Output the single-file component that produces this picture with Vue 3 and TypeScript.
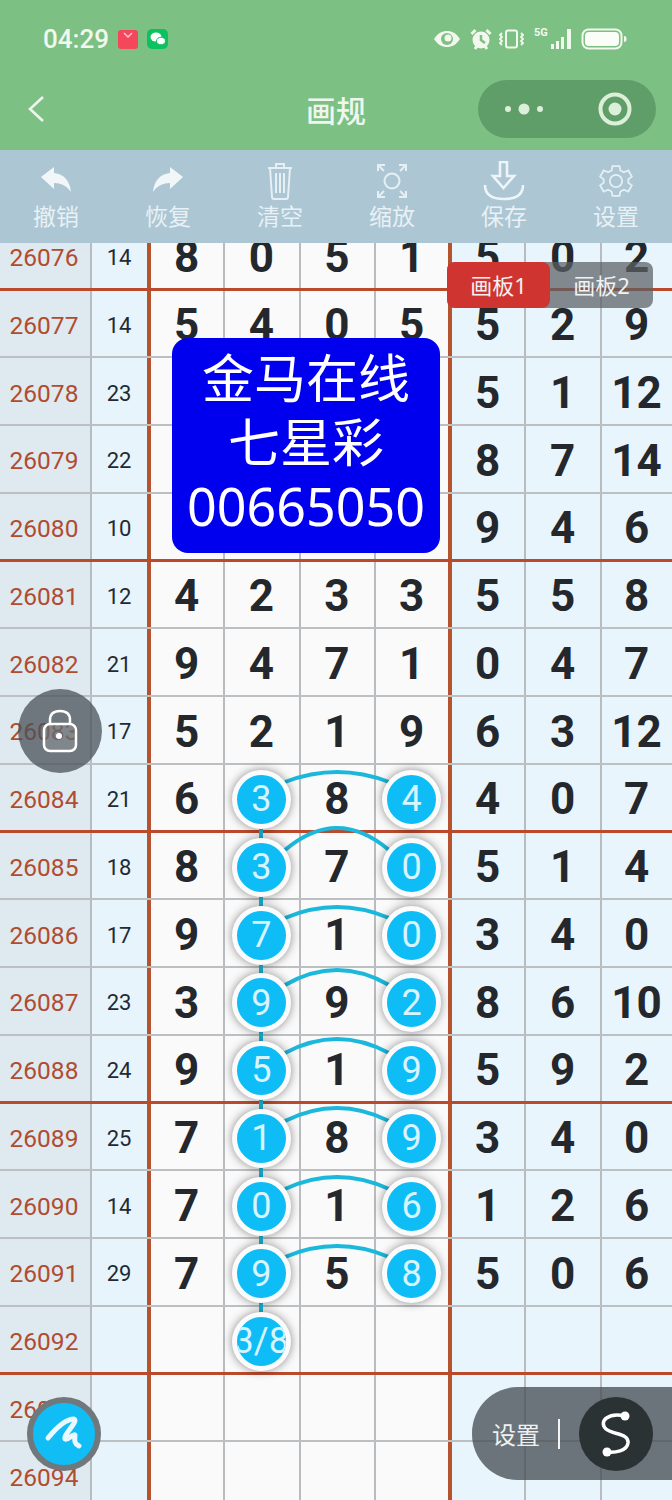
<template>
  <div class="page">
    <header class="top">
      <div class="status">
        <span class="time">04:29</span>
        <svg class="app-dot" width="20" height="19" viewBox="0 0 20 19">
          <rect width="20" height="19" rx="3" fill="#f5475b" />
          <path d="M6 3l4 4 4-4" fill="none" stroke="#ffc9cf" stroke-width="1.5" />
        </svg>
        <svg class="app-dot" width="21" height="20" viewBox="0 0 21 20">
          <rect width="21" height="20" rx="5" fill="#0bc160" />
          <ellipse cx="9" cy="8" rx="5.5" ry="4.5" fill="#fff" />
          <ellipse cx="14" cy="12" rx="4.5" ry="3.8" fill="#fff" stroke="#0bc160" />
        </svg>
        <div class="status-right">
          <svg width="28" height="20" viewBox="0 0 28 20">
            <path d="M1 10C5 4 9 2 14 2s9 2 13 8c-4 6-8 8-13 8S5 16 1 10z" fill="#f2f8ee" />
            <circle cx="14" cy="10" r="6" fill="#7cc083" />
            <circle cx="15" cy="9" r="3.5" fill="#f2f8ee" />
          </svg>
          <svg width="22" height="22" viewBox="0 0 22 22">
            <circle cx="11" cy="12" r="8.5" fill="#f2f8ee" />
            <path d="M11 7v5l4 3" fill="none" stroke="#7cc083" stroke-width="2.5" />
            <path d="M1.500 6l4-4M20.500 6l-4-4M5 21l2-3M17 21l-2-3" stroke="#f2f8ee" stroke-width="3" />
          </svg>
          <svg width="27" height="20" viewBox="0 0 27 20">
            <rect x="8" y="1.500" width="11" height="17" rx="2" fill="none" stroke="#f2f8ee" stroke-width="2" />
            <path d="M4 4L2 6l2 2-2 2 2 2-2 2 2 2M23 4l2 2-2 2 2 2-2 2 2 2-2 2" fill="none" stroke="#f2f8ee" stroke-width="1.8" />
          </svg>
          <span class="signal">
            <span class="five-g">5G</span>
            <svg width="22" height="20" viewBox="0 0 22 20">
              <path d="M1 15h3v5H1zM6 12h3v8H6zM11 8h3v12h-3zM17 0h4v20h-4z" fill="#f2f8ee" />
            </svg>
          </span>
          <svg width="46" height="22" viewBox="0 0 46 22">
            <rect x="1.5" y="1.5" width="39" height="19" rx="6" fill="none" stroke="#f2f8ee" stroke-width="2" />
            <rect x="4" y="4" width="34" height="14" rx="4" fill="#fbfdf9" />
            <path d="M43 8c2 0 2.500 1 2.500 3s-.5 3-2.500 3z" fill="#f2f8ee" />
          </svg>
        </div>
      </div>
      <nav class="nav">
        <svg class="back" width="18" height="28" viewBox="0 0 18 28">
          <path d="M16 2L3 14l13 12" fill="none" stroke="#eef6ef" stroke-width="2.600" />
        </svg>
        <span class="title">画规</span>
        <div class="capsule">
          <svg width="46" height="14" viewBox="0 0 46 14">
            <circle cx="5" cy="7" r="3" fill="#dcefd9" />
            <circle cx="21" cy="7" r="5.500" fill="#dcefd9" />
            <circle cx="37" cy="7" r="3" fill="#dcefd9" />
          </svg>
          <svg width="34" height="34" viewBox="0 0 34 34">
            <circle cx="17" cy="17" r="14.500" fill="none" stroke="#dcefd9" stroke-width="4" />
            <circle cx="17" cy="17" r="6.500" fill="#dcefd9" />
          </svg>
        </div>
      </nav>
    </header>

    <div class="toolbar">
      <div v-for="tool in tools" :key="tool.label" class="tool">
        <svg class="tool-icon" width="44" height="40" viewBox="0 0 44 40" v-html="tool.icon" />
        <span>{{ tool.label }}</span>
      </div>
    </div>

    <main class="board">
      <div class="rows">
        <div v-for="row in rows" :key="row.id" :class="['row', { split: row.split }]">
          <div class="cell issue">{{ row.id }}</div>
          <div class="cell sum">{{ row.sum }}</div>
          <div v-for="(num, i) in row.main" :key="i" :class="['cell', 'main', { edge: i === 3 }]">
            <span v-if="row.circled.includes(i)" class="ball">{{ num }}</span>
            <template v-else>{{ num }}</template>
          </div>
          <div v-for="(num, i) in row.side" :key="i" class="cell side">{{ num }}</div>
        </div>
      </div>

      <svg class="lines" width="672" height="1257" viewBox="0 243 672 1257">
        <path d="M261 799V1340" stroke="#1cb8dc" stroke-width="4" fill="none" />
        <path v-for="arc in arcs" :key="arc" :d="arc" stroke="#1cb8dc" stroke-width="4" fill="none" />
      </svg>

      <div class="ad">
        <span>金马在线</span>
        <span>七星彩</span>
        <span>00665050</span>
      </div>

      <div class="tabs">
        <span class="tab on">画板1</span>
        <span class="tab">画板2</span>
      </div>

      <div class="lock">
        <svg width="36" height="46" viewBox="0 0 36 46">
          <path d="M8 17V12C8 6 12 3 18 3s10 3 10 9v5" fill="none" stroke="#fff" stroke-width="2.500" />
          <rect x="2" y="16" width="32" height="27" rx="6" fill="rgba(255,255,255,.12)" stroke="#fff" stroke-width="2.500" />
          <circle cx="17" cy="28" r="3" fill="#fff" />
        </svg>
      </div>

      <div class="pen">
        <svg width="62" height="62" viewBox="0 0 62 62">
          <path d="M15 35C24 24 34 16 41 16c5 2-11 16-9 20 3 2 8-6 10-4 0 4-2 8 4 11" fill="none" stroke="#e9f9ff" stroke-width="5" stroke-linecap="round" stroke-linejoin="round" />
        </svg>
      </div>

      <div class="dock">
        <span class="dock-text">设置</span>
        <i class="dock-bar" />
        <div class="dock-btn">
          <svg width="74" height="74" viewBox="0 0 74 74">
            <path d="M46 19C30 15 19 24 27 32c7 6 23 4 22 14-1 8-13 10-21 9" fill="none" stroke="#fff" stroke-width="3.500" />
            <circle cx="46" cy="19" r="4.500" fill="#fff" />
            <circle cx="28" cy="55" r="4.500" fill="#fff" />
          </svg>
        </div>
      </div>
    </main>
  </div>
</template>

<script setup lang="ts">
interface Row {
  id: number
  sum: string
  main: string[]
  side: string[]
  circled: number[]
  split: boolean
}

const line = 'fill="none" stroke="#e6f0f4" stroke-width="2"'

const tools = [
  {
    label: '撤销',
    icon: '<path d="M7 16L20 6v6c10 1 16 8 17 19-4-6-10-9-17-9v6z" fill="#f1f7f9"/>',
  },
  {
    label: '恢复',
    icon: '<path d="M37 16L24 6v6C14 13 8 20 7 31c4-6 10-9 17-9v6z" fill="#f1f7f9"/>',
  },
  {
    label: '清空',
    icon: `<path d="M10 7h24M18 7V3h8v4M12 7l2 29c0 1 1 2 2 2h12c1 0 2-1 2-2l2-29M18 12v20M22 12v20M26 12v20" ${line}/>`,
  },
  {
    label: '缩放',
    icon: `<path d="M8 10V4h7M36 10V4h-7M8 30v6h7M36 30v6h-7M8 4l6 6M36 4l-6 6M8 36l6-6M36 36l-6-6" ${line}/><circle cx="22" cy="20" r="7.500" ${line}/>`,
  },
  {
    label: '保存',
    icon: `<path d="M18 1h7v14h7L21.500 27 11 15h7zM3 24c0 10 8 14 19 14s19-4 19-14" fill="none" stroke="#eef5f8" stroke-width="2.600"/>`,
  },
  {
    label: '设置',
    icon: `<g transform="translate(22 20) scale(.88) translate(-22 -20)"><path d="M18 3h8l1 5 4 2 5-2 4 7-4 3v4l4 3-4 7-5-2-4 2-1 5h-8l-1-5-4-2-5 2-4-7 4-3v-4l-4-3 4-7 5 2 4-2z" ${line}/><circle cx="22" cy="20" r="7" ${line}/></g>`,
  },
]

const table: [number, string, string, string, number[]][] = [
  [26076, '14', '8051', '502', []],
  [26077, '14', '5405', '529', []],
  [26078, '23', '', '5 1 12', []],
  [26079, '22', '', '8 7 14', []],
  [26080, '10', '', '946', []],
  [26081, '12', '4233', '558', []],
  [26082, '21', '9471', '047', []],
  [26083, '17', '5219', '6 3 12', []],
  [26084, '21', '6384', '407', [1, 3]],
  [26085, '18', '8370', '514', [1, 3]],
  [26086, '17', '9710', '340', [1, 3]],
  [26087, '23', '3992', '8 6 10', [1, 3]],
  [26088, '24', '9519', '592', [1, 3]],
  [26089, '25', '7189', '340', [1, 3]],
  [26090, '14', '7016', '126', [1, 3]],
  [26091, '29', '7958', '506', [1, 3]],
  [26092, '', ' 3/8  ', '', [1]],
  [26093, '', '', '', []],
  [26094, '', '', '', []],
]

function splitMain(main: string): string[] {
  if (main.includes('/')) return ['', '3/8', '', '']
  return [0, 1, 2, 3].map((i) => main[i] ?? '')
}

function splitSide(side: string): string[] {
  if (side.includes(' ')) return side.split(' ')
  return [0, 1, 2].map((i) => side[i] ?? '')
}

const rows: Row[] = table.map(([id, sum, main, side, circled]) => ({
  id,
  sum,
  main: splitMain(main),
  side: splitSide(side),
  circled,
  split: (id - 26076) % 4 === 0,
}))

// arcs between the two balls of a row: centre y and height of the top
const arcs = [
  [799, 772],
  [867, 828],
  [935, 907],
  [1002, 970],
  [1070, 1039],
  [1138, 1108],
  [1206, 1177],
  [1274, 1246],
].map(([cy, peak]) => {
  const y = cy - 17
  return `M285 ${y}Q337 ${2 * peak - y} 389 ${y}`
})
</script>

<style scoped>
.page {
  width: 672px;
  height: 1500px;
  overflow: hidden;
  display: flex;
  flex-direction: column;
  font-family: 'Noto Sans', 'Noto Sans CJK SC', sans-serif;
}

.top {
  height: 150px;
  background: #7cc083;
  color: #f2f8ee;
}

.status {
  height: 78px;
  display: flex;
  align-items: center;
  padding: 0 45px 0 43px;
}

.time {
  font-family: Roboto, sans-serif;
  font-size: 26px;
  font-weight: 500;
  margin-right: 9px;
}

.app-dot {
  margin-right: 9px;
}

.status-right {
  margin-left: auto;
  display: flex;
  align-items: center;
  gap: 9px;
}

.status-right > svg:nth-child(2) {
  margin-right: -3px;
}

.signal {
  display: flex;
  align-items: flex-end;
  position: relative;
  width: 38px;
  justify-content: flex-end;
}

.five-g {
  position: absolute;
  left: 0;
  top: -3px;
  font-size: 11px;
  font-weight: 700;
  font-family: Roboto, sans-serif;
}

.nav {
  height: 58px;
  margin-top: 2px;
  display: flex;
  align-items: center;
  position: relative;
  padding: 0 16px 0 27px;
}

.title {
  position: absolute;
  left: 0;
  right: 0;
  top: 11px;
  text-align: center;
  font-size: 30px;
  font-weight: 500;
  line-height: 40px;
  color: #eef6ef;
}

.capsule {
  margin-left: auto;
  width: 178px;
  height: 58px;
  box-sizing: border-box;
  border-radius: 29px;
  background: #5f9e68;
  display: flex;
  align-items: center;
  gap: 49px;
  justify-content: center;
}

.toolbar {
  height: 93px;
  background: #acc6d3;
  display: grid;
  grid-template-columns: repeat(6, 112px);
  flex: none;
}

.tool {
  display: flex;
  flex-direction: column;
  align-items: center;
  padding-top: 11px;
  font-size: 23px;
  line-height: 28px;
  color: #e8f1f5;
}

.tool-icon {
  display: block;
  margin-bottom: 1px;
}

.board {
  position: relative;
  flex: 1;
  overflow: hidden;
  background: #fafafa;
}

.rows {
  margin-top: -20.250px;
}

.row {
  display: grid;
  grid-template-columns: 92px 59px 74px 75.5px 75.5px 76px 74px 76px 70px;
  height: 67.75px;
  box-sizing: border-box;
  border-bottom: 2px solid #bcc0c2;
}

.row.split {
  border-bottom: 3px solid #bb4a2c;
}

.cell {
  display: flex;
  align-items: center;
  justify-content: center;
  box-sizing: border-box;
  border-right: 2px solid #b8bcbe;
  font-family: Roboto, sans-serif;
  min-width: 0;
  padding-top: 4px;
}

.issue {
  background: #dfe9f0;
  color: #b04c30;
  font-size: 24.500px;
  padding-right: 2px;
}

.sum {
  background: #e8f4fb;
  border-right: 4px solid #b5532f;
  color: #1f2a33;
  font-size: 22px;
  padding-right: 1px;
}

.main,
.side {
  font-size: 44px;
  font-weight: 700;
  color: #24282c;
  padding-right: 1px;
}

.main {
  background: #fafafa;
}

.main.edge {
  border-right: 4px solid #b5532f;
}

.side {
  background: #e9f5fc;
}

.side:last-child {
  border-right: none;
}

.ball {
  position: relative;
  z-index: 2;
  flex: none;
  width: 59px;
  height: 59px;
  box-sizing: border-box;
  border: 5px solid #fbfbfb;
  border-radius: 50%;
  background: #0fbdf6;
  box-shadow: 0 0 10px rgba(0, 0, 0, 0.45);
  display: flex;
  align-items: center;
  justify-content: center;
  overflow: hidden;
  font-size: 36px;
  font-weight: 400;
  color: #d8f4ff;
  white-space: nowrap;
}

.lines {
  position: absolute;
  left: 0;
  top: 0;
  z-index: 1;
}

.ad {
  position: absolute;
  z-index: 3;
  left: 172px;
  top: 95px;
  width: 268px;
  height: 215px;
  box-sizing: border-box;
  padding-top: 8px;
  background: #0000ef;
  border-radius: 16px;
  color: #fff;
  font-size: 52px;
  line-height: 64px;
  display: flex;
  flex-direction: column;
  align-items: center;
}

.tabs {
  position: absolute;
  z-index: 3;
  left: 447px;
  top: 19px;
  display: flex;
  width: 206px;
  height: 46px;
  border-radius: 8px;
  background: rgba(90, 96, 100, 0.72);
  font-size: 22px;
  color: #f2f2f2;
}

.tab {
  flex: 1;
  display: flex;
  align-items: center;
  justify-content: center;
  border-radius: 8px;
  padding-bottom: 3px;
  box-sizing: border-box;
}

.tab.on {
  background: #cf3431;
}

.lock {
  position: absolute;
  z-index: 4;
  left: 18px;
  top: 446px;
  width: 84px;
  height: 84px;
  border-radius: 50%;
  background: rgba(70, 80, 85, 0.74);
  display: flex;
  align-items: center;
  justify-content: center;
}

.pen {
  position: absolute;
  z-index: 4;
  left: 27px;
  top: 1154px;
  width: 74px;
  height: 74px;
  box-sizing: border-box;
  border: 6px solid #70787c;
  border-radius: 50%;
  background: #10bdf5;
}

.dock {
  position: absolute;
  z-index: 4;
  left: 472px;
  top: 1144px;
  width: 200px;
  height: 93px;
  border-radius: 46px 0 0 46px;
  background: rgba(70, 80, 85, 0.78);
  display: flex;
  align-items: center;
  padding-left: 20px;
  box-sizing: border-box;
}

.dock-text {
  font-size: 24px;
  color: #f0f0f0;
}

.dock-bar {
  width: 2px;
  height: 30px;
  margin-left: 18px;
  background: #f4f4f4;
}

.dock-btn {
  width: 74px;
  height: 74px;
  margin-left: 19px;
  border-radius: 50%;
  background: #2b3233;
}

.dock-btn svg {
  display: block;
}
</style>

<style>
html,
body {
  margin: 0;
  background: #fff;
}
</style>
